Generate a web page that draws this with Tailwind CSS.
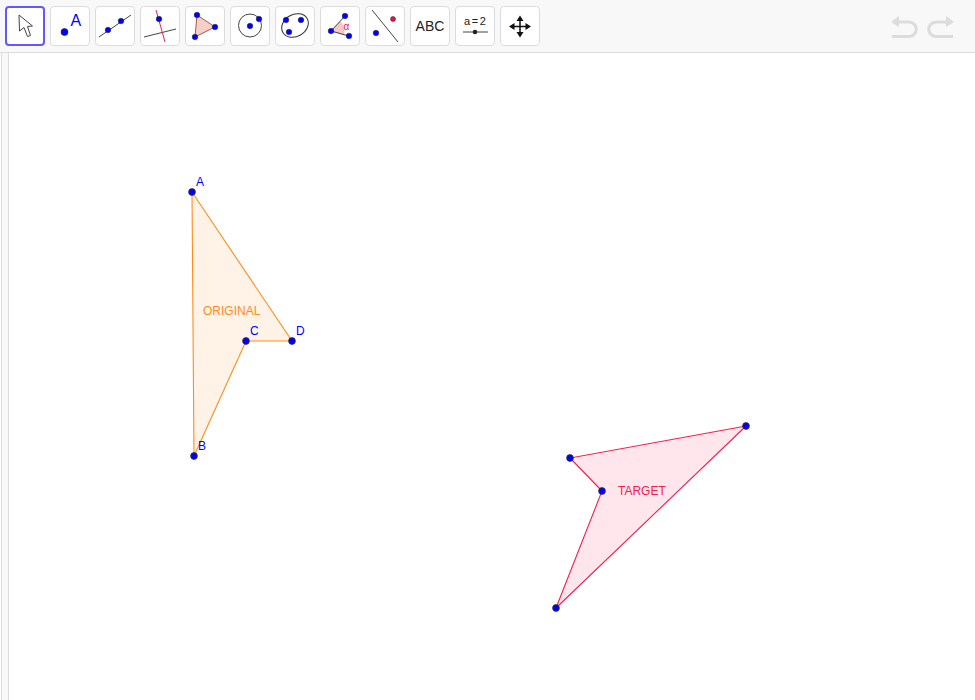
<!DOCTYPE html>
<html lang="en">
<head>
  <meta charset="UTF-8" />
  <title>GeoGebra - Original and Target</title>
  <script src="https://cdn.jsdelivr.net/npm/@tailwindcss/browser@4"></script>
</head>
<body class="bg-white h-screen overflow-hidden flex flex-col font-['Liberation_Sans',sans-serif]">

  <!-- Toolbar -->
  <header class="h-[53px] shrink-0 bg-[#f8f8f8] border-b border-[#dcdcdc] flex items-start justify-between pl-[5px] pt-[6px]">
    <div class="flex gap-[5px]">
      <!-- Move -->
      <button class="w-10 h-10 bg-white rounded-[4px] border-2 border-[#6557ff]">
        <svg width="36" height="36" viewBox="2 8 36 36"><path d="M14 15 L14.5 31 L19 27.5 L22.5 36.5 L25.5 35.5 L22.5 26.5 L27.5 26 Z" fill="#fff" stroke="#444" stroke-width="1"/></svg>
      </button>
      <!-- Point -->
      <button class="w-10 h-10 bg-white rounded-[4px] border border-[#dcdcdc]">
        <svg width="38" height="38" viewBox="1 7 38 38"><circle cx="14.5" cy="32" r="3.5" fill="#0000ff" stroke="#222" stroke-width=".6"/><text x="20.5" y="25.5" font-size="16" fill="#0000ff">A</text></svg>
      </button>
      <!-- Line -->
      <button class="w-10 h-10 bg-white rounded-[4px] border border-[#dcdcdc]">
        <svg width="38" height="38" viewBox="1 7 38 38"><line x1="4" y1="37" x2="36" y2="15" stroke="#444"/><circle cx="13" cy="30" r="2.8" fill="#0000ff" stroke="#222" stroke-width=".5"/><circle cx="26" cy="21" r="2.8" fill="#0000ff" stroke="#222" stroke-width=".5"/></svg>
      </button>
      <!-- Perpendicular -->
      <button class="w-10 h-10 bg-white rounded-[4px] border border-[#dcdcdc]">
        <svg width="38" height="38" viewBox="1 7 38 38"><line x1="4" y1="37" x2="36" y2="29" stroke="#444"/><line x1="16" y1="10" x2="25" y2="42" stroke="#f0204f"/><circle cx="19" cy="19" r="2.8" fill="#0000ff" stroke="#222" stroke-width=".5"/></svg>
      </button>
      <!-- Polygon -->
      <button class="w-10 h-10 bg-white rounded-[4px] border border-[#dcdcdc]">
        <svg width="38" height="38" viewBox="1 7 38 38"><polygon points="12,15 30,27 10,37" fill="#f5cfc8" stroke="#a5584a" stroke-width="1"/><circle cx="12" cy="15" r="2.8" fill="#0000ff" stroke="#222" stroke-width=".5"/><circle cx="30" cy="27" r="2.8" fill="#0000ff" stroke="#222" stroke-width=".5"/><circle cx="10" cy="37" r="2.8" fill="#0000ff" stroke="#222" stroke-width=".5"/></svg>
      </button>
      <!-- Circle -->
      <button class="w-10 h-10 bg-white rounded-[4px] border border-[#dcdcdc]">
        <svg width="38" height="38" viewBox="1 7 38 38"><circle cx="20" cy="25.5" r="11.5" fill="none" stroke="#444"/><circle cx="20" cy="26" r="2.8" fill="#0000ff" stroke="#222" stroke-width=".5"/><circle cx="29" cy="19" r="2.8" fill="#0000ff" stroke="#222" stroke-width=".5"/></svg>
      </button>
      <!-- Ellipse -->
      <button class="w-10 h-10 bg-white rounded-[4px] border border-[#dcdcdc]">
        <svg width="38" height="38" viewBox="1 7 38 38"><ellipse cx="20" cy="25.5" rx="14" ry="11" transform="rotate(-30 20 25.5)" fill="none" stroke="#333"/><circle cx="11" cy="20" r="2.8" fill="#0000ff" stroke="#222" stroke-width=".5"/><circle cx="26" cy="20" r="2.8" fill="#0000ff" stroke="#222" stroke-width=".5"/><circle cx="14" cy="32" r="2.8" fill="#0000ff" stroke="#222" stroke-width=".5"/></svg>
      </button>
      <!-- Angle -->
      <button class="w-10 h-10 bg-white rounded-[4px] border border-[#dcdcdc]">
        <svg width="38" height="38" viewBox="1 7 38 38"><path d="M11 31 L20 21.5 A13 13 0 0 1 23.5 34.5 Z" fill="#f8c8c8" stroke="#f0a0a0" stroke-width=".5"/><line x1="11" y1="31" x2="25" y2="16" stroke="#444"/><line x1="11" y1="31" x2="29" y2="36" stroke="#444"/><circle cx="11" cy="31" r="2.8" fill="#0000ff" stroke="#222" stroke-width=".5"/><circle cx="25" cy="16" r="2.8" fill="#0000ff" stroke="#222" stroke-width=".5"/><circle cx="29" cy="36" r="2.8" fill="#0000ff" stroke="#222" stroke-width=".5"/><text x="23.5" y="30" font-size="10" fill="#f0204f">α</text></svg>
      </button>
      <!-- Reflect -->
      <button class="w-10 h-10 bg-white rounded-[4px] border border-[#dcdcdc]">
        <svg width="38" height="38" viewBox="1 7 38 38"><line x1="7" y1="10" x2="33" y2="42" stroke="#444"/><circle cx="28" cy="19" r="2.5" fill="#f0103f" stroke="#222" stroke-width=".5"/><circle cx="11" cy="33" r="2.8" fill="#0000ff" stroke="#222" stroke-width=".5"/></svg>
      </button>
      <!-- Text -->
      <button class="w-10 h-10 bg-white rounded-[4px] border border-[#dcdcdc] text-[14px] text-[#222] pt-[1px]">ABC</button>
      <!-- Slider -->
      <button class="w-10 h-10 bg-white rounded-[4px] border border-[#dcdcdc]">
        <svg width="38" height="38" viewBox="1 7 38 38"><text x="20" y="25" text-anchor="middle" font-size="11" word-spacing="-1.5" fill="#222">a = 2</text><line x1="8" y1="32" x2="33" y2="32" stroke="#444"/><circle cx="20" cy="32" r="2.3" fill="#222"/></svg>
      </button>
      <!-- Move graphics view -->
      <button class="w-10 h-10 bg-white rounded-[4px] border border-[#dcdcdc]">
        <svg width="38" height="38" viewBox="1 7 38 38"><path d="M20 18 V34 M12 26.5 H28" stroke="#111" stroke-width="1.5"/><path d="M20 15.5 L23.5 21 H16.5 Z M20 37.5 L16.5 32 H23.5 Z M9 26.5 L14.5 23 V30 Z M31 26.5 L25.5 23 V30 Z" fill="#111"/></svg>
      </button>
    </div>
    <!-- Undo / redo -->
    <div class="flex gap-[9px] pr-[20px] pt-[10px]">
      <svg width="28" height="23" viewBox="0 0 28 23" fill="none" stroke="#dcdcdc" stroke-width="3"><path d="M5 6 H19 A7.25 7.25 0 0 1 19 20.5 H2"/><path d="M1 6 L9 0 V11 Z" fill="#dcdcdc" stroke="none"/></svg>
      <svg width="28" height="23" viewBox="0 0 28 23" fill="none" stroke="#dcdcdc" stroke-width="3"><path d="M23 6 H9 A7.25 7.25 0 0 0 9 20.5 H26"/><path d="M27 6 L19 0 V11 Z" fill="#dcdcdc" stroke="none"/></svg>
    </div>
  </header>

  <main class="flex-1 flex min-h-0">
    <!-- Collapsed side panel -->
    <div class="w-[8px] shrink-0 bg-[#f8f8f8] ml-[1px] border-l border-r border-[#dcdcdc]"></div>

    <!-- Graphics view -->
    <section class="flex-1 relative">
      <svg class="absolute inset-0 w-full h-full" viewBox="9 53 966 647" preserveAspectRatio="xMinYMin slice">
        <polygon points="192,192 194,456 246,341 292,341" fill="#ff8c1a" fill-opacity=".1" stroke="#ff8c1a" stroke-width="1.1"/>
        <text x="203" y="315" font-size="12" fill="#ff8c1a">ORIGINAL</text>
        <g fill="#0000ff" stroke="#333" stroke-width=".8">
          <circle cx="192" cy="192" r="3.4"/>
          <circle cx="194" cy="456" r="3.4"/>
          <circle cx="246" cy="341" r="3.4"/>
          <circle cx="292" cy="341" r="3.4"/>
        </g>
        <g font-size="12" fill="#0000ff">
          <text x="196" y="186">A</text>
          <text x="198" y="450">B</text>
          <text x="250" y="335">C</text>
          <text x="296" y="335">D</text>
        </g>

        <polygon points="746,426 570,458 602,491 556,608" fill="#ff0040" fill-opacity=".1" stroke="#f0204f" stroke-width="1.1"/>
        <text x="618" y="495" font-size="12" fill="#f0204f">TARGET</text>
        <g fill="#0000ff" stroke="#333" stroke-width=".8">
          <circle cx="746" cy="426" r="3.4"/>
          <circle cx="570" cy="458" r="3.4"/>
          <circle cx="602" cy="491" r="3.4"/>
          <circle cx="556" cy="608" r="3.4"/>
        </g>
      </svg>
    </section>
  </main>
</body>
</html>
